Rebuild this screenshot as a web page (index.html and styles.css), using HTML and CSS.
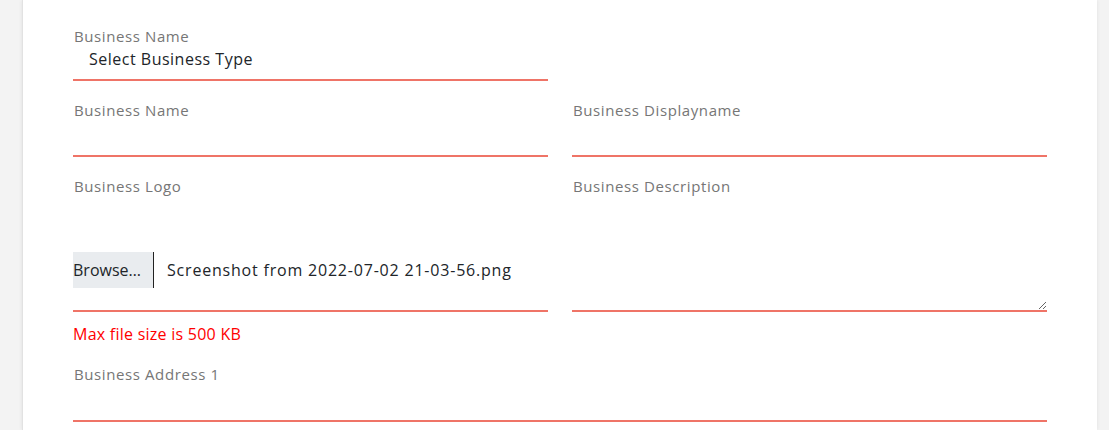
FILE: index.html
```html
<!DOCTYPE html>
<html lang="en">
<head>
<meta charset="utf-8">
<title>Business Form</title>
<link rel="stylesheet" href="styles.css">
</head>
<body>
<div class="card">
  <form class="form">
    <div class="row">
      <div class="field">
        <label class="label">Business Name</label>
        <div class="select">Select Business Type</div>
      </div>
    </div>
    <div class="row">
      <div class="field">
        <label class="label">Business Name</label>
        <input class="input" type="text">
      </div>
      <div class="field">
        <label class="label">Business Displayname</label>
        <input class="input" type="text">
      </div>
    </div>
    <div class="row">
      <div class="field">
        <label class="label">Business Logo</label>
        <div class="file">
          <span class="browse">Browse…</span>
          <span class="filename">Screenshot from 2022-07-02 21-03-56.png</span>
        </div>
        <div class="error">Max file size is 500 KB</div>
      </div>
      <div class="field">
        <label class="label">Business Description</label>
        <textarea class="textarea"></textarea>
      </div>
    </div>
    <div class="row single">
      <div class="field">
        <label class="label">Business Address 1</label>
        <input class="input tall" type="text">
      </div>
    </div>
  </form>
</div>
</body>
</html>
```

FILE: styles.css
```css
* { box-sizing: border-box; }
html, body { margin: 0; padding: 0; }
body {
  background: #f3f3f3;
  font-family: "Open Sans", "Noto Sans", sans-serif;
  height: 430px;
  overflow: hidden;
}
.card {
  margin-left: 22px;
  width: 1075px;
  height: 430px;
  background: #fff;
  border-left: 1px solid #e2e2e2;
  box-shadow: 0 0 4px rgba(0,0,0,0.08);
  padding: 25px 50px 0 50px;
}
.form {
  display: flex;
  flex-direction: column;
  gap: 18px;
}
.row {
  display: grid;
  grid-template-columns: 475px 475px;
  column-gap: 24px;
  align-items: start;
}
.row.single { grid-template-columns: 974px; }
.field { display: flex; flex-direction: column; }
.label {
  font-size: 15px;
  line-height: 22px;
  letter-spacing: 0.6px;
  color: #767676;
  padding-left: 1px;
}
.select {
  height: 34px;
  border-bottom: 2px solid #ef7467;
  font-size: 16px;
  line-height: 24px;
  letter-spacing: 0.5px;
  color: #212529;
  padding-left: 16px;
}
.input {
  height: 36px;
  border: none;
  border-bottom: 2px solid #ef7467;
  outline: none;
  background: transparent;
  font: inherit;
  padding: 0;
}
.input.tall { height: 37px; }
.file {
  height: 115px;
  border-bottom: 2px solid #ef7467;
  padding-top: 55px;
  display: flex;
  align-items: flex-start;
}
.browse {
  height: 36px;
  width: 81px;
  background: #e9ecef;
  border-right: 1px solid #222;
  font-size: 16px;
  line-height: 36px;
  color: #212529;
  flex-shrink: 0;
}
.filename {
  font-size: 16px;
  line-height: 36px;
  letter-spacing: 0.8px;
  color: #212529;
  padding-left: 13px;
}
.error {
  color: #ff0000;
  font-size: 16px;
  line-height: 22px;
  letter-spacing: 0.25px;
  margin-top: 11px;
}
.textarea {
  height: 115px;
  border: none;
  border-bottom: 2px solid #ef7467;
  outline: none;
  font: inherit;
  resize: vertical;
}
```
